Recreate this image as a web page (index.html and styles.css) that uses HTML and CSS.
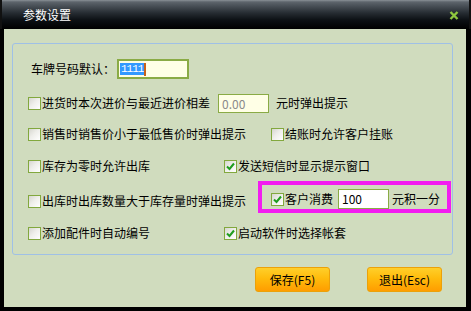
FILE: index.html
```html
<!DOCTYPE html>
<html lang="zh-CN">
<head>
  <meta charset="UTF-8">
  <title>参数设置</title>
  <link rel="stylesheet" href="styles.css">
</head>
<body>
  <div class="window">
    <div class="titlebar">
      <span class="title">参数设置</span>
      <svg class="close" width="10" height="9" viewBox="0 0 10 9">
        <path d="M1.5 1 L8.5 8 M8.5 1 L1.5 8" stroke="#8fc73e" stroke-width="2.4" fill="none"/>
      </svg>
    </div>

    <div class="content">
      <div class="group">
        <div class="row r1">
          <span class="label">车牌号码默认：</span>
          <div class="field field-focus"><span class="sel">1111</span><span class="caret"></span></div>
        </div>

        <div class="row r2">
          <label class="opt"><span class="cb"></span>进货时本次进价与最近进价相差</label>
          <div class="field field-num">0.00</div>
          <span class="suffix">元时弹出提示</span>
        </div>

        <div class="row r3">
          <label class="opt w-long"><span class="cb"></span>销售时销售价小于最低售价时弹出提示</label>
          <label class="opt"><span class="cb"></span>结账时允许客户挂账</label>
        </div>

        <div class="row r4">
          <label class="opt w-short"><span class="cb"></span>库存为零时允许出库</label>
          <label class="opt"><span class="cb checked"><svg viewBox="0 0 11 11"><path d="M2 5.5 L4.5 8 L9 2.5" stroke="#1f9d1f" stroke-width="2" fill="none"/></svg></span>发送短信时显示提示窗口</label>
        </div>

        <div class="row r5">
          <label class="opt w-mid"><span class="cb"></span>出库时出库数量大于库存量时弹出提示</label>
          <div class="highlight">
            <label class="opt"><span class="cb checked"><svg viewBox="0 0 11 11"><path d="M2 5.5 L4.5 8 L9 2.5" stroke="#1f9d1f" stroke-width="2" fill="none"/></svg></span>客户消费</label>
            <div class="field field-white">100</div>
            <span class="suffix">元积一分</span>
          </div>
        </div>

        <div class="row r6">
          <label class="opt w-short"><span class="cb"></span>添加配件时自动编号</label>
          <label class="opt"><span class="cb checked"><svg viewBox="0 0 11 11"><path d="M2 5.5 L4.5 8 L9 2.5" stroke="#1f9d1f" stroke-width="2" fill="none"/></svg></span>启动软件时选择帐套</label>
        </div>
      </div>

      <div class="buttons">
        <button class="btn">保存(F5)</button>
        <button class="btn">退出(Esc)</button>
      </div>
    </div>
  </div>
</body>
</html>
```

FILE: styles.css
```css
body {
  margin: 0;
  font-family: "Noto Sans CJK SC", "Liberation Sans", sans-serif;
  font-size: 12px;
  color: #000;
}
.window {
  width: 471px;
  height: 311px;
  background: #000;
  display: flex;
  flex-direction: column;
}
.titlebar {
  height: 29px;
  flex: none;
  box-sizing: border-box;
  display: flex;
  align-items: center;
  justify-content: space-between;
  padding: 0 10px 0 23px;
  border-left: 2px solid #111;
  border-right: 2px solid #111;
  background: linear-gradient(#8a9196 0, #5d646b 2px, #484f56 6px, #262c32 13px, #0c1014 20px, #000 29px);
  color: #fff;
}
.title {
  font-size: 12px;
  line-height: 14px;
  margin-left: -2px;
}
.close {
  display: block;
  margin-top: 1px;
}
.content {
  flex: 1;
  margin: 0 5px 4px 4px;
  background: #d0dcbe;
  padding-top: 14px;
}
.group {
  margin: 0 13px 0 8px;
  height: 212px;
  box-sizing: border-box;
  border: 1px solid #9fc0e6;
  border-radius: 3px;
  padding: 15px 0 0 15px;
}
.row {
  display: flex;
  align-items: center;
  height: 20px;
  line-height: 20px;
  white-space: nowrap;
}
.r2 { margin-top: 14px; }
.r3 { margin-top: 11px; }
.r4 { margin-top: 12px; }
.r5 { margin-top: 5px; height: 32px; }
.r6 { margin-top: 10px; }

.label { margin-left: 3px; }
.opt {
  display: flex;
  align-items: center;
  gap: 1px;
}
.w-long { width: 243px; }
.w-short { width: 196px; }
.w-mid { width: 230px; margin-top: 8px; }

.cb {
  width: 11px;
  height: 11px;
  border: 1px solid #82a83e;
  background: linear-gradient(135deg, #d6d6cf 0%, #eeeeea 45%, #ffffff 100%);
  display: inline-block;
  flex: none;
}
.cb svg {
  display: block;
  width: 11px;
  height: 11px;
}
.field {
  box-sizing: border-box;
  height: 20px;
  border: 1px solid #8aab45;
  background: #ffffe6;
  line-height: 18px;
  padding-left: 3px;
}
.field-focus {
  width: 72px;
  margin-left: 2px;
  border-width: 2px;
  line-height: 16px;
  padding-left: 1px;
  display: flex;
  align-items: center;
}
.sel {
  background: #3399ff;
  color: #fff;
  line-height: 12px;
  padding: 0 1px;
  font-family: "Liberation Mono", monospace;
  font-size: 11px;
  letter-spacing: -1px;
}
.caret {
  width: 2px;
  height: 13px;
  background: #c8621a;
}
.field-num {
  width: 51px;
  margin-left: 8px;
  color: #8a8a8a;
  height: 19px;
  line-height: 17px;
}
.suffix { margin-left: 7px; }
.highlight {
  box-sizing: border-box;
  width: 193px;
  height: 32px;
  border: 4px solid #f21cf0;
  padding: 4px 0 0 9px;
  display: flex;
  align-items: center;
}
.field-white {
  width: 51px;
  margin-left: 5px;
  background: #fff;
}
.highlight .suffix { margin-left: 3px; }

.buttons {
  display: flex;
  justify-content: flex-end;
  gap: 37px;
  margin-top: 12px;
  padding-right: 24px;
}
.btn {
  width: 75px;
  height: 25px;
  padding: 0;
  border: 1px solid #eba10a;
  border-radius: 3px;
  background: linear-gradient(#ffcf2a 0%, #ffbb0c 45%, #ff9d00 100%);
  font-family: "Noto Sans CJK SC", sans-serif;
  font-size: 12px;
  color: #000;
}
```
